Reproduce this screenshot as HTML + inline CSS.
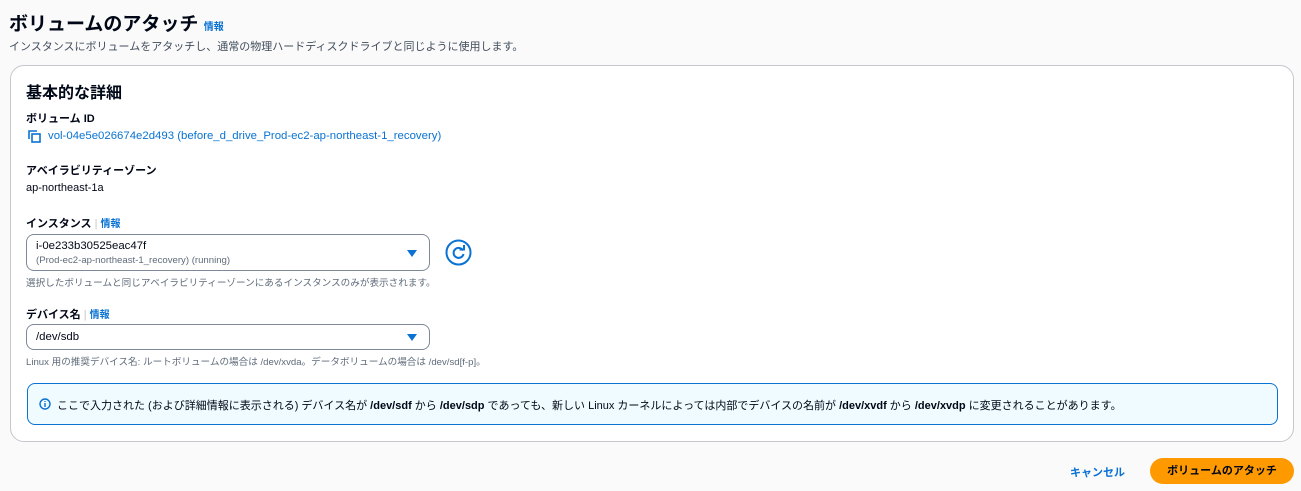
<!DOCTYPE html>
<html><head><meta charset="utf-8"><style>
*{margin:0;padding:0;box-sizing:border-box}
body{width:1301px;height:491px;background:#fafafa;font-family:"Liberation Sans","Noto Sans CJK JP",sans-serif;color:#000716;position:relative;overflow:hidden}
.a{position:absolute;white-space:nowrap}
.link{color:#0972d3}
.lbl{font-size:11px;font-weight:bold}
.sel{position:absolute;left:26px;width:404px;border:1px solid #7d8998;border-radius:8px;background:#fff}
.tri{position:absolute;right:12px;width:0;height:0;border-left:5px solid transparent;border-right:5px solid transparent;border-top:7px solid #0972d3}
.hint{font-size:9.6px;color:#5f6b7a}
</style></head><body>
<div class="a" style="left:9px;top:9px;font-size:19px;font-weight:bold">ボリュームのアタッチ <span class="link" style="font-size:10px">情報</span></div>
<div class="a" style="left:9px;top:38px;font-size:11px;color:#414d5c">インスタンスにボリュームをアタッチし、通常の物理ハードディスクドライブと同じように使用します。</div>
<div class="a" style="left:10px;top:65px;width:1284px;height:377px;background:#fff;border:1px solid #c6c6cd;border-radius:14px"></div>
<div class="a" style="left:26px;top:79px;font-size:16px;font-weight:bold">基本的な詳細</div>
<div class="a lbl" style="left:26px;top:110px">ボリューム ID</div>
<svg class="a" style="left:28px;top:130px" width="13" height="13" viewBox="0 0 13 13"><path d="M1 9V1h8" fill="none" stroke="#0972d3" stroke-width="1.6"/><rect x="4" y="4" width="8" height="8" fill="none" stroke="#0972d3" stroke-width="1.6"/></svg>
<div class="a link" style="left:48px;top:130px;font-size:11.4px">vol-04e5e026674e2d493 (before_d_drive_Prod-ec2-ap-northeast-1_recovery)</div>
<div class="a lbl" style="left:26px;top:162px">アベイラビリティーゾーン</div>
<div class="a" style="left:26px;top:182px;font-size:11px">ap-northeast-1a</div>
<div class="a lbl" style="left:26px;top:215px">インスタンス <span style="color:#c6c6cd;font-weight:normal">|</span> <span class="link" style="font-size:10px">情報</span></div>
<div class="sel" style="top:234px;height:37px"><div class="a" style="left:9px;top:5px;font-size:11.4px">i-0e233b30525eac47f</div><div class="a" style="left:9px;top:20px;font-size:9.6px;color:#5f6b7a">(Prod-ec2-ap-northeast-1_recovery) (running)</div><div class="tri" style="top:15px"></div></div>
<svg class="a" style="left:445px;top:239px" width="27" height="27" viewBox="0 0 27 27"><circle cx="13.5" cy="13.5" r="12" fill="#fff" stroke="#0972d3" stroke-width="2"/><path d="M18 11.5A5 5 0 1 0 18.5 15" fill="none" stroke="#0972d3" stroke-width="2"/><path d="M14.5 10.5h4.5V6" fill="none" stroke="#0972d3" stroke-width="2"/></svg>
<div class="a hint" style="left:26px;top:275px">選択したボリュームと同じアベイラビリティーゾーンにあるインスタンスのみが表示されます。</div>
<div class="a lbl" style="left:26px;top:306px">デバイス名 <span style="color:#c6c6cd;font-weight:normal">|</span> <span class="link" style="font-size:10px">情報</span></div>
<div class="sel" style="top:324px;height:26px"><div class="a" style="left:9px;top:6px;font-size:11.4px">/dev/sdb</div><div class="tri" style="top:9px"></div></div>
<div class="a hint" style="left:26px;top:354px">Linux 用の推奨デバイス名: ルートボリュームの場合は /dev/xvda。データボリュームの場合は /dev/sd[f-p]。</div>
<div class="a" style="left:27px;top:383px;width:1251px;height:42px;background:#f0fbff;border:1px solid #0972d3;border-radius:8px"></div>
<svg class="a" style="left:39px;top:398px" width="12" height="12" viewBox="0 0 12 12"><circle cx="6" cy="6" r="5" fill="none" stroke="#0972d3" stroke-width="1.4"/><path d="M6 5v4M6 3v1" stroke="#0972d3" stroke-width="1.4"/></svg>
<div class="a" style="left:57px;top:397px;font-size:11px">ここで入力された (および詳細情報に表示される) デバイス名が <b>/dev/sdf</b> から <b>/dev/sdp</b> であっても、新しい Linux カーネルによっては内部でデバイスの名前が <b>/dev/xvdf</b> から <b>/dev/xvdp</b> に変更されることがあります。</div>
<div class="a link" style="left:1070px;top:464px;font-size:11px;font-weight:bold">キャンセル</div>
<div class="a" style="left:1150px;top:458px;width:144px;height:26px;background:#ff9900;border-radius:13px;font-size:11px;font-weight:bold;text-align:center;line-height:26px">ボリュームのアタッチ</div>
</body></html>
